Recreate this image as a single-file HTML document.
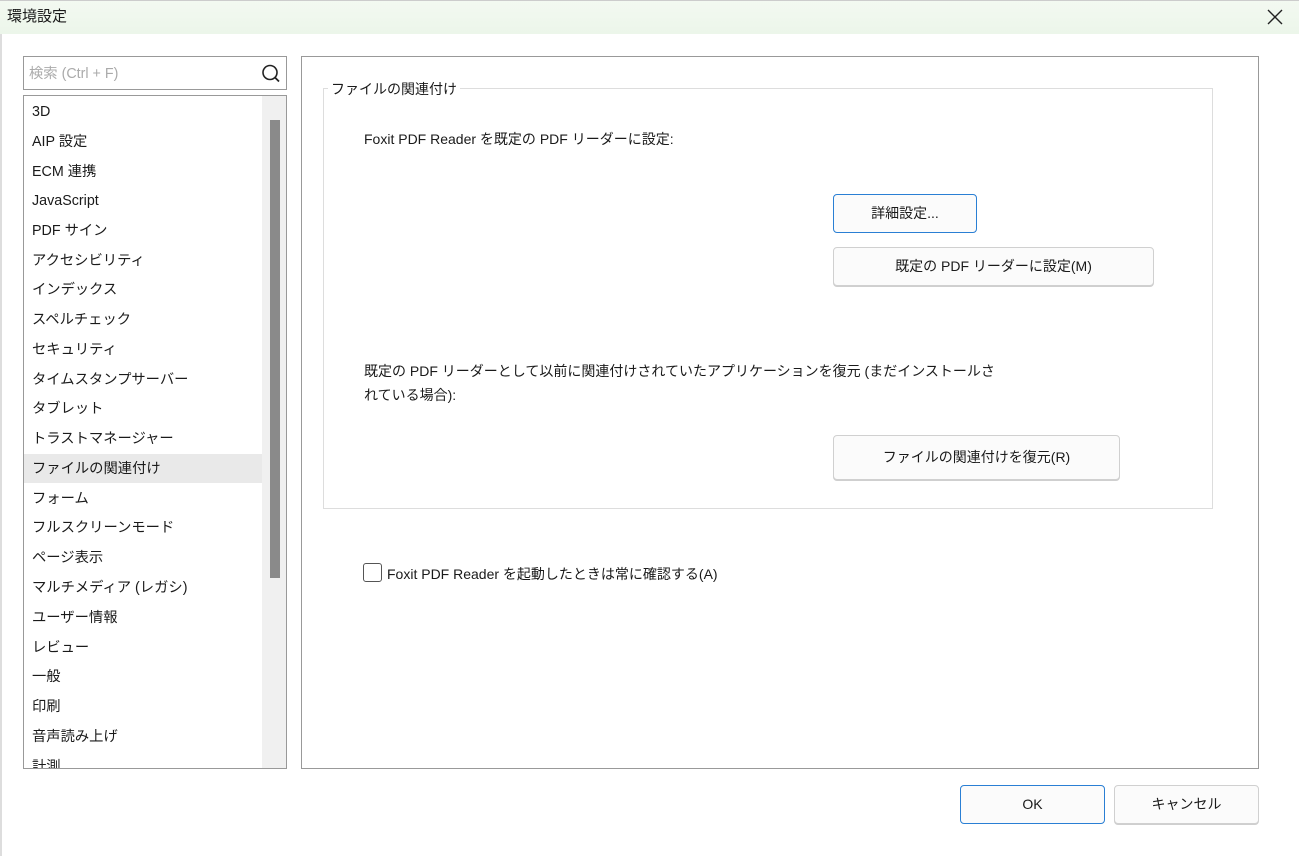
<!DOCTYPE html><html><head><meta charset="utf-8"><style>
*{box-sizing:border-box;margin:0;padding:0}
body{width:1299px;height:856px;background:#fff;font-family:"Liberation Sans","Noto Sans CJK JP",sans-serif;color:#1a1a1a;position:relative;overflow:hidden;font-size:14px;line-height:20px}
.a{position:absolute;white-space:nowrap}
.title{left:0;top:0;width:1299px;height:34px;background:linear-gradient(#f3f9f1,#ecf6ea);border-top:1px solid #ccc}
.btn{position:absolute;border:1px solid #d0d0d0;border-radius:4px;background:#fbfbfb;text-align:center;font-size:14px;box-shadow:0 1px 0 #cfcfcf}
.li{position:absolute;left:32px;font-size:14.3px;white-space:nowrap;line-height:20px}
</style></head><body>
<div class="a title"></div>
<div class="a" style="left:7px;top:7px;font-size:15px">環境設定</div>
<svg class="a" style="left:1267px;top:9px" width="16" height="16"><path d="M1 1L15 15M15 1L1 15" stroke="#222" stroke-width="1.4"/></svg>
<div class="a" style="left:0;top:34px;width:2px;height:822px;background:#ddd"></div>
<div class="a" style="left:23px;top:56px;width:264px;height:34px;border:1px solid #999"></div>
<div class="a" style="left:29px;top:64px;color:#aaa;font-size:14.3px">検索 (Ctrl + F)</div>
<svg class="a" style="left:261px;top:64px" width="20" height="20"><circle cx="9" cy="8.5" r="7" fill="none" stroke="#222" stroke-width="1.6"/><line x1="14" y1="13.5" x2="18" y2="17.5" stroke="#222" stroke-width="1.8"/></svg>
<div class="a" style="left:23px;top:95px;width:264px;height:674px;border:1px solid #999;overflow:hidden">
<div class="a" style="left:238px;top:0;width:24px;height:672px;background:#f0f0f0"></div>
<div class="a" style="left:246px;top:24px;width:10px;height:458px;background:#8a8a8a"></div>
<div class="a" style="left:0;top:358px;width:238px;height:29px;background:#e9e9e9"></div>
</div>
<div class="li" style="top:102px">3D</div>
<div class="li" style="top:132px">AIP 設定</div>
<div class="li" style="top:162px">ECM 連携</div>
<div class="li" style="top:191px">JavaScript</div>
<div class="li" style="top:221px">PDF サイン</div>
<div class="li" style="top:251px">アクセシビリティ</div>
<div class="li" style="top:280px">インデックス</div>
<div class="li" style="top:310px">スペルチェック</div>
<div class="li" style="top:340px">セキュリティ</div>
<div class="li" style="top:370px">タイムスタンプサーバー</div>
<div class="li" style="top:399px">タブレット</div>
<div class="li" style="top:429px">トラストマネージャー</div>
<div class="li" style="top:459px">ファイルの関連付け</div>
<div class="li" style="top:489px">フォーム</div>
<div class="li" style="top:518px">フルスクリーンモード</div>
<div class="li" style="top:548px">ページ表示</div>
<div class="li" style="top:578px">マルチメディア (レガシ)</div>
<div class="li" style="top:608px">ユーザー情報</div>
<div class="li" style="top:638px">レビュー</div>
<div class="li" style="top:667px">一般</div>
<div class="li" style="top:697px">印刷</div>
<div class="li" style="top:727px">音声読み上げ</div>
<div class="a" style="left:24px;top:756px;width:236px;height:12px;overflow:hidden"><div style="position:absolute;left:8px;top:1px;font-size:14.3px">計測</div></div>
<div class="a" style="left:301px;top:56px;width:958px;height:713px;border:1px solid #999"></div>
<div class="a" style="left:323px;top:88px;width:890px;height:421px;border:1px solid #ddd"></div>
<div class="a" style="left:328px;top:79px;background:#fff;padding:0 3px">ファイルの関連付け</div>
<div class="a" style="left:364px;top:129px">Foxit PDF Reader を既定の PDF リーダーに設定:</div>
<div class="btn" style="left:833px;top:194px;width:144px;height:39px;line-height:37px;border-color:#2a7fd4;box-shadow:none">詳細設定...</div>
<div class="btn" style="left:833px;top:247px;width:321px;height:39px;line-height:37px">既定の PDF リーダーに設定(M)</div>
<div class="a" style="left:364px;top:359px;line-height:24px">既定の PDF リーダーとして以前に関連付けされていたアプリケーションを復元 (まだインストールさ<br>れている場合):</div>
<div class="btn" style="left:833px;top:435px;width:287px;height:45px;line-height:43px">ファイルの関連付けを復元(R)</div>
<div class="a" style="left:363px;top:563px;width:19px;height:19px;border:1px solid #555;border-radius:3px"></div>
<div class="a" style="left:387px;top:564px">Foxit PDF Reader を起動したときは常に確認する(A)</div>
<div class="btn" style="left:960px;top:785px;width:145px;height:39px;line-height:37px;border-color:#2a7fd4;box-shadow:none">OK</div>
<div class="btn" style="left:1114px;top:785px;width:145px;height:39px;line-height:37px">キャンセル</div>
</body></html>
